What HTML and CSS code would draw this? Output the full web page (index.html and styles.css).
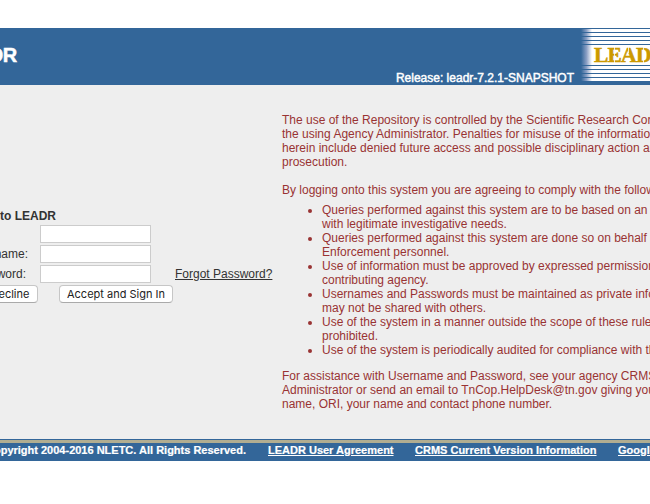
FILE: index.html
```html
<!DOCTYPE html>
<html lang="en">
<head>
<meta charset="utf-8">
<title>LEADR</title>
<link rel="stylesheet" href="styles.css">
</head>
<body>
<header class="banner">
  <div class="brand"><h1>LEADR</h1></div>
  <div class="release">Release: leadr-7.2.1-SNAPSHOT</div>
  <svg class="logo" width="69" height="57" viewBox="0 0 69 57">
    <defs>
      <linearGradient id="fade"><stop offset="0" stop-color="#369"/><stop offset=".5" stop-color="#8a9fc4"/><stop offset="1" stop-color="#fff"/></linearGradient>
    </defs>
    <path fill="#fff" d="M11 1h58v52H11z"/>
    <path fill="url(#fade)" d="M0 1h11v52H0z"/>
    <path fill="#369" d="M0 4h69v1H0zM0 8h69v1H0zM0 12h69v1H0zM0 16h69v1H0zM0 37h69v1H0zM0 41h69v1H0zM0 45h69v1H0zM0 49h69v1H0z"/>
    <text class="logo-text" x="13 26.500 40 55 70" y="34">LEADR</text>
    <path stroke="#fff" stroke-width=".8" d="M33.500 18v17M47.500 18v7M62.500 18v17"/>
  </svg>
</header>
<main class="content">
  <form class="login">
    <div class="title"><span>Welcome to LEADR</span></div>
    <div class="row"><label></label><input type="text"></div>
    <div class="row"><label>Username:</label><input type="text"></div>
    <div class="row"><label class="pass">Password:</label><input type="password"><a class="forgot" href="#">Forgot Password?</a></div>
    <div class="buttons"><button class="decline" type="button">Decline</button><button class="accept" type="button">Accept and Sign In</button></div>
  </form>
  <section class="notice">
    <p>The use of the Repository is controlled by the Scientific Research Corporation and<br>the using Agency Administrator. Penalties for misuse of the information<br>herein include denied future access and possible disciplinary action and<br>prosecution.</p>
    <p class="intro">By logging onto this system you are agreeing to comply with the following:</p>
    <ul>
      <li>Queries performed against this system are to be based on an<br>with legitimate investigative needs.</li>
      <li>Queries performed against this system are done so on behalf<br>Enforcement personnel.</li>
      <li>Use of information must be approved by expressed permission<br>contributing agency.</li>
      <li>Usernames and Passwords must be maintained as private information<br>may not be shared with others.</li>
      <li>Use of the system in a manner outside the scope of these rules<br>prohibited.</li>
      <li>Use of the system is periodically audited for compliance with the</li>
    </ul>
    <p>For assistance with Username and Password, see your agency CRMS<br>Administrator or send an email to TnCop.HelpDesk@tn.gov giving your<br>name, ORI, your name and contact phone number.</p>
  </section>
</main>
<footer class="footer">
  <div class="copy"><span>Copyright 2004-2016 NLETC. All Rights Reserved.</span></div>
  <a class="agreement" href="#">LEADR User Agreement</a>
  <a class="version" href="#">CRMS Current Version Information</a>
  <a href="#">Google</a>
</footer>
</body>
</html>
```
FILE: styles.css
```css
* { box-sizing: border-box; }
body {
  margin: 0;
  padding-top: 28px;
  width: 650px;
  height: 504px;
  overflow: hidden;
  background: #fff;
  color: #333;
  font: 12px/14px "Liberation Sans", Arial, sans-serif;
}
.banner { display: flex; height: 57px; background: #369; color: #fff; }
.brand { display: flex; justify-content: flex-end; width: 17px; padding-top: 16px; }
.brand h1 { margin: 0; font-size: 20px; line-height: 22px; letter-spacing: -.3px; -webkit-text-stroke: .5px #fff; }
.release {
  width: 564px;
  padding: 43px 7px 0 0;
  text-align: right;
  white-space: nowrap;
  -webkit-text-stroke: .45px #fff;
}
.logo { display: block; flex: none; }
.logo-text { font: bold 21.500px "Liberation Serif", serif; fill: #c90; stroke: #c90; stroke-width: .5; }
.content { display: flex; height: 354px; background: #eee; overflow: hidden; }
.login { flex: none; width: 282px; padding-top: 124px; }
.title { display: flex; justify-content: flex-end; width: 56px; font-weight: bold; white-space: nowrap; }
.title + .row { margin-top: 1px; }
.row { display: flex; align-items: center; height: 20px; }
.row label { display: flex; justify-content: flex-end; flex: none; width: 28px; margin-right: 12px; }
.row .pass { width: 26px; margin-right: 14px; }
input { width: 111px; height: 18px; margin: 0; padding: 0; border: 1px solid #ccc; background: #fff; }
.forgot { margin-left: 24px; color: #333; white-space: nowrap; text-underline-offset: 1px; }
.buttons { display: flex; gap: 21px; padding-top: 1px; }
button {
  height: 18px;
  padding: 0;
  border: 1px solid #c6c6c6;
  border-bottom-color: #aaa;
  border-radius: 4px;
  background: #fff;
  color: #222;
  font: 11px/14px Inter, sans-serif;
  white-space: nowrap;
}
.decline { flex: none; width: 56px; margin-left: -18px; }
.accept { width: 114px; }
.notice { flex: none; width: 368px; padding-top: 28px; color: #933; white-space: nowrap; }
.notice p { margin: 0; }
.notice .intro { margin-top: 14px; }
ul { margin: 6px 0 12px; padding-left: 40px; }
.footer {
  display: flex;
  height: 22px;
  padding-top: 4px;
  background: linear-gradient(#369 1px, #b1ad91 1px 4px, #369 4px);
  color: #fff;
  font-size: 11px;
  font-weight: bold;
  white-space: nowrap;
  overflow: hidden;
  -webkit-text-stroke: .2px #fff;
}
.copy { display: flex; justify-content: flex-end; flex: none; width: 246px; margin-right: 22px; }
.footer a { flex: none; color: #fff; }
.agreement { width: 126px; margin-right: 21px; }
.version { width: 182px; margin-right: 21px; }
```
